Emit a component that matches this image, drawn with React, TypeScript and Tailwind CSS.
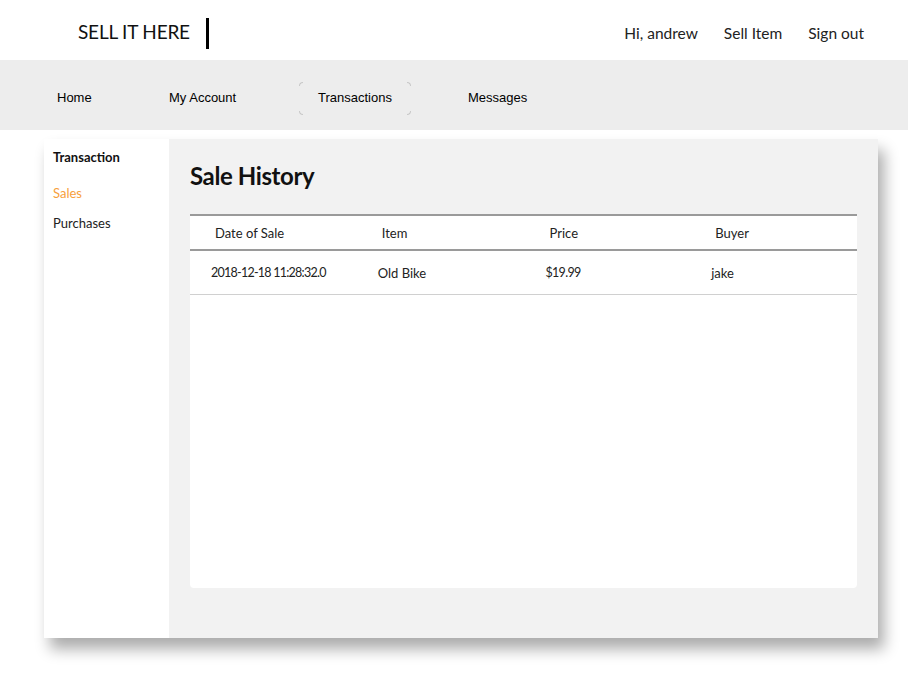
import React from 'react';

const sans = { fontFamily: 'Lato, "Open Sans", sans-serif' };
const arial = { fontFamily: '"Liberation Sans", Arial, sans-serif' };

const navLinks = [
  { label: 'Home', w: 'w-[112px]' },
  { label: 'My Account', w: 'w-[130px]' },
  { label: 'Transactions', w: 'w-[112px] justify-center mr-[57px]' },
  { label: 'Messages', w: 'w-[100px]' },
];

const sales = [
  { date: '2018-12-18 11:28:32.0', item: 'Old Bike', price: '$19.99', buyer: 'jake' },
];

function Corner({ pos }: { pos: string }) {
  return <span className={`absolute w-[4px] h-[4px] border-[#c8c8c8] ${pos}`} />;
}

export default function App() {
  return (
    <div className="w-[908px] h-[684px] bg-white text-[#111] overflow-hidden" style={sans}>
      {/* top header */}
      <header className="h-[60px] flex items-center justify-between pt-[4px] pl-[78px] pr-[44px]">
        <div className="flex items-center">
          <span className="text-[19px] tracking-[-0.2px] text-[#111]">SELL IT HERE</span>
          <span className="ml-[16px] mt-[3px] w-[3px] h-[31px] bg-black" />
        </div>
        <nav className="flex items-center gap-[26px] mt-[4px] text-[15.5px] text-[#222]">
          <a>Hi, andrew</a>
          <a>Sell Item</a>
          <a>Sign out</a>
        </nav>
      </header>

      {/* menu bar */}
      <div className="h-[70px] bg-[#ededed] flex items-center pt-[6px] pl-[57px] text-[13px] text-black" style={arial}>
        {navLinks.map((l) => (
          <div key={l.label} className={`relative h-[33px] flex items-center ${l.w}`}>
            {l.label}
            {l.label === 'Transactions' && (
              <>
                <Corner pos="top-0 left-0 border-t border-l rounded-tl-[4px]" />
                <Corner pos="top-0 right-0 border-t border-r rounded-tr-[4px]" />
                <Corner pos="bottom-0 left-0 border-b border-l rounded-bl-[4px]" />
                <Corner pos="bottom-0 right-0 border-b border-r rounded-br-[4px]" />
              </>
            )}
          </div>
        ))}
      </div>

      {/* main card */}
      <div className="ml-[44px] mt-[9px] w-[834px] h-[499px] flex shadow-[6px_11px_14px_rgba(0,0,0,0.33)]">
        <aside className="w-[125px] bg-white pl-[9px] pt-[9px] text-[13px]">
          <div className="font-bold text-[#111]">Transaction</div>
          <div className="mt-[16px] text-[#f7a03c]">Sales</div>
          <div className="mt-[11px] text-[#222]">Purchases</div>
        </aside>

        <main className="flex-1 bg-[#f2f2f2] pl-[21px] pr-[21px] pt-[20px]">
          <h1 className="text-[24px] font-bold leading-[34px] text-[#111] tracking-[-0.4px]">Sale History</h1>
          <div className="mt-[21px] h-[374px] bg-white rounded-b-[4px] border-t-2 border-[#9a9a9a] text-[13px]">
            <div className="grid grid-cols-4 h-[35px] pt-[3px] items-center border-b-2 border-[#9a9a9a] text-[#222]">
              <div className="pl-[25px]">Date of Sale</div>
              <div className="pl-[25px]">Item</div>
              <div className="pl-[26px]">Price</div>
              <div className="pl-[25px]">Buyer</div>
            </div>
            {sales.map((s) => (
              <div key={s.date} className="grid grid-cols-4 h-[44px] pt-[2px] items-center border-b border-[#d0d0d0] text-[#222]">
                <div className="pl-[21px] text-[12.5px] tracking-[-0.75px]">{s.date}</div>
                <div className="pl-[21px]">{s.item}</div>
                <div className="pl-[22px] text-[12.5px] tracking-[-0.7px]">{s.price}</div>
                <div className="pl-[21px]">{s.buyer}</div>
              </div>
            ))}
          </div>
        </main>
      </div>
    </div>
  );
}
